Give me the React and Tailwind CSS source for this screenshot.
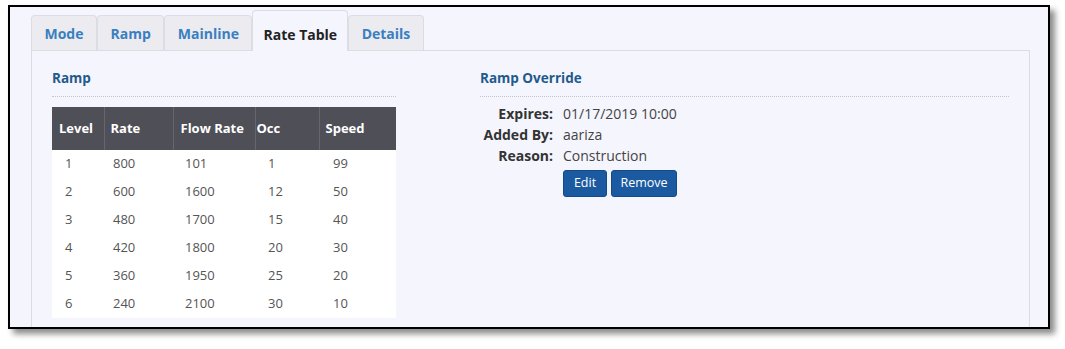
import React from 'react';

const tabs = ['Mode', 'Ramp', 'Mainline', 'Rate Table', 'Details'];

const rows = [
  [1, 800, 101, 1, 99],
  [2, 600, 1600, 12, 50],
  [3, 480, 1700, 15, 40],
  [4, 420, 1800, 20, 30],
  [5, 360, 1950, 25, 20],
  [6, 240, 2100, 30, 10],
];

const cols = [
  { name: 'Level', w: 'w-[52px]', hp: 'pl-[7px]', bp: 'pl-[13px]' },
  { name: 'Rate', w: 'w-[69px]', hp: 'pl-[6px]', bp: 'pl-[9px]' },
  { name: 'Flow Rate', w: 'w-[82px]', hp: 'pl-[7px]', bp: 'pl-[12px]' },
  { name: 'Occ', w: 'w-[64px]', hp: 'pl-[1px]', bp: 'pl-[13px]' },
  { name: 'Speed', w: 'w-[77px]', hp: 'pl-[6px]', bp: 'pl-[14px]' },
];

const details = [
  ['Expires:', '01/17/2019 10:00'],
  ['Added By:', 'aariza'],
  ['Reason:', 'Construction'],
];

function Tab({ label, active }) {
  if (active) {
    return (
      <div className="h-[41px] -mb-px px-[10px] flex items-center pt-[6px] border border-b-0 border-[#dcdce4] rounded-t-[4px] bg-[#f5f5fd] font-bold text-[#222]">
        {label}
      </div>
    );
  }
  return (
    <div className="h-[35px] px-[12.5px] flex items-center pt-px border border-b-0 border-[#dcdce4] rounded-t-[4px] bg-[#ebebf0] font-bold text-[#3a7fc0]">
      {label}
    </div>
  );
}

export default function App() {
  return (
    <div className="w-[1065px] h-[349px] bg-white pt-[5px] pl-[8px] font-['Open_Sans',sans-serif] text-[14px]">
      <div className="w-[1042px] h-[324px] border-2 border-black bg-[#f5f5fd] overflow-hidden shadow-[5px_5px_6px_rgba(0,0,0,0.45)] pl-[21px] pt-[3px]">
        <div className="flex items-end h-[40px]">
          {tabs.map((t) => (
            <Tab key={t} label={t} active={t === 'Rate Table'} />
          ))}
        </div>
        <div className="w-[999px] h-[300px] border border-[#dcdce4] pl-[20px] pr-[20px] flex gap-[84px]">
          <div className="w-[344px]">
            <h3 className="pt-[17px] h-[46px] border-b border-dotted border-[#c4c4cc] font-bold text-[#1f5a8c] text-[13.5px]">
              Ramp
            </h3>
            <table className="mt-[10px] w-[344px] bg-white border-collapse table-fixed text-[13px]">
              <thead>
                <tr className="h-[43px] bg-[#4f4f57] text-white font-bold">
                  {cols.map((c, i) => (
                    <th
                      key={c.name}
                      className={`${c.w} ${c.hp} text-left font-bold ${i > 0 ? 'border-l border-[#66666e]' : ''}`}
                    >
                      {c.name}
                    </th>
                  ))}
                </tr>
              </thead>
              <tbody>
                {rows.map((r) => (
                  <tr key={r[0]} className="h-[28px] text-[#555]">
                    {r.map((v, i) => (
                      <td key={i} className={cols[i].bp}>
                        {v}
                      </td>
                    ))}
                  </tr>
                ))}
              </tbody>
            </table>
          </div>
          <div className="w-[530px]">
            <h3 className="pt-[17px] h-[46px] border-b border-dotted border-[#c4c4cc] font-bold text-[#1f5a8c] text-[13.5px]">
              Ramp Override
            </h3>
            <div className="mt-[6px] grid grid-cols-[73px_1fr] gap-x-[10px]">
              {details.map(([k, v]) => (
                <React.Fragment key={k}>
                  <div className="h-[21px] leading-[21px] text-right font-bold text-[#333] whitespace-nowrap">{k}</div>
                  <div className="h-[21px] leading-[21px] text-[#444]">{v}</div>
                </React.Fragment>
              ))}
              <div />
              <div className="flex gap-[4px] mt-[4px]">
                <button className="h-[27px] w-[44px] rounded-[3px] bg-[#1b5aa0] border border-[#154a85] text-white text-[12.5px]">
                  Edit
                </button>
                <button className="h-[27px] w-[66px] rounded-[3px] bg-[#1b5aa0] border border-[#154a85] text-white text-[12.5px]">
                  Remove
                </button>
              </div>
            </div>
          </div>
        </div>
      </div>
    </div>
  );
}
